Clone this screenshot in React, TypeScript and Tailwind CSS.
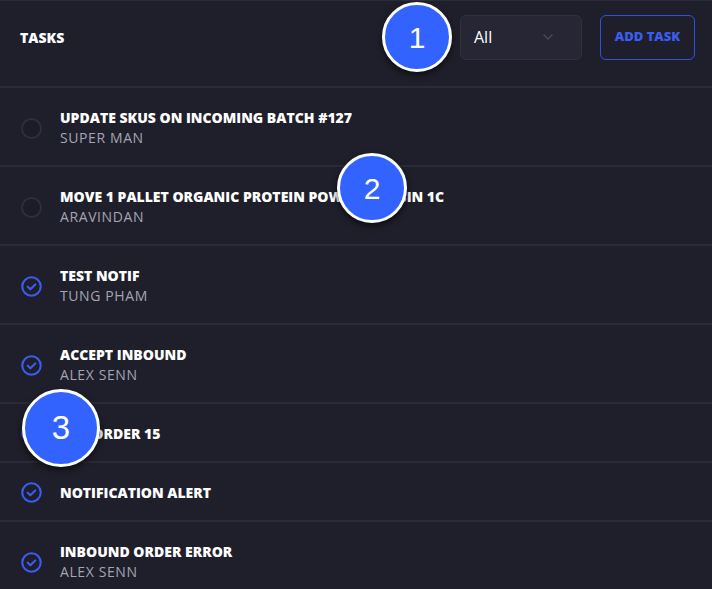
import React from 'react';
import { ChevronDown } from 'lucide-react';

interface Task {
  title: string;
  owner?: string;
  done: boolean;
}

const tasks: Task[] = [
  { title: 'UPDATE SKUS ON INCOMING BATCH #127', owner: 'SUPER MAN', done: false },
  { title: 'MOVE 1 PALLET ORGANIC PROTEIN POWDER TO BIN 1C', owner: 'ARAVINDAN', done: false },
  { title: 'TEST NOTIF', owner: 'TUNG PHAM', done: true },
  { title: 'ACCEPT INBOUND', owner: 'ALEX SENN', done: true },
  { title: 'FILL ORDER 15', done: true },
  { title: 'NOTIFICATION ALERT', done: true },
  { title: 'INBOUND ORDER ERROR', owner: 'ALEX SENN', done: true },
];

function Badge({ n, className }: { n: number; className: string }) {
  return (
    <div
      className={`absolute flex items-center justify-center rounded-full bg-[#3363ff] border-[3px] border-white text-white shadow-[0_3px_6px_rgba(0,0,0,0.6)] ${className}`}
      style={{ fontFamily: '"Liberation Sans", Arial, sans-serif' }}
    >
      {n}
    </div>
  );
}

function CheckIcon() {
  return (
    <svg width="21" height="21" viewBox="0 0 20 20" fill="none">
      <circle cx="10" cy="10" r="8.8" stroke="#3a5cf0" strokeWidth="2" />
      <path
        d="M6.4 10.2 L8.9 12.7 L13.6 8"
        stroke="#3a5cf0"
        strokeWidth="2"
        strokeLinecap="round"
        strokeLinejoin="round"
      />
    </svg>
  );
}

export default function App() {
  return (
    <div
      className="relative w-[712px] h-[589px] overflow-hidden bg-[#1f1f2b] border-t border-[#2a2a39]"
      style={{ fontFamily: '"Open Sans", "Noto Sans", sans-serif' }}
    >
      <div className="flex items-center justify-between h-[87px] pl-5 pr-[17px] pb-[13px] border-b-2 border-[#2a2a39]">
        <h1 className="text-[14px] font-extrabold text-white">TASKS</h1>
        <div className="flex items-center gap-[18px]">
          <div className="flex items-center justify-between w-[122px] h-[45px] pl-[13px] pr-[25px] rounded-md bg-[#262635] border border-[#30303f]">
            <span className="text-[16px] font-medium text-white">All</span>
            <ChevronDown className="w-4 h-4 text-[#4a4a5c]" strokeWidth={2} />
          </div>
          <button className="w-[95px] h-[45px] rounded-md border border-[#2f51e0] text-[#3a5cf0] text-[13px] font-extrabold">
            ADD TASK
          </button>
        </div>
      </div>

      <div>
        {tasks.map((t) => (
          <div
            key={t.title}
            className={`flex items-center pl-[21px] border-b-2 border-[#2a2a39] ${
              t.owner ? 'pt-[20px] pb-[17px]' : 'pt-[19px] pb-[17px]'
            }`}
          >
            <div className="w-[21px] h-[21px] mr-[18px] shrink-0 flex items-center justify-center">
              {t.done ? (
                <CheckIcon />
              ) : (
                <div className="w-[21px] h-[21px] rounded-full border-2 border-[#2d2d3d] bg-[#1c1c28]" />
              )}
            </div>
            <div>
              <div className="text-[14px] leading-5 font-extrabold text-white">{t.title}</div>
              {t.owner && (
                <div className="text-[14px] leading-5 font-medium tracking-[0.6px] text-[#a4a4b4]">
                  {t.owner}
                </div>
              )}
            </div>
          </div>
        ))}
      </div>

      <Badge n={1} className="left-[382px] top-[1px] w-[70px] h-[70px] text-[30px]" />
      <Badge n={2} className="left-[337px] top-[152px] w-[70px] h-[70px] text-[30px]" />
      <Badge n={3} className="left-[22px] top-[388px] w-[78px] h-[78px] text-[33px]" />
    </div>
  );
}
